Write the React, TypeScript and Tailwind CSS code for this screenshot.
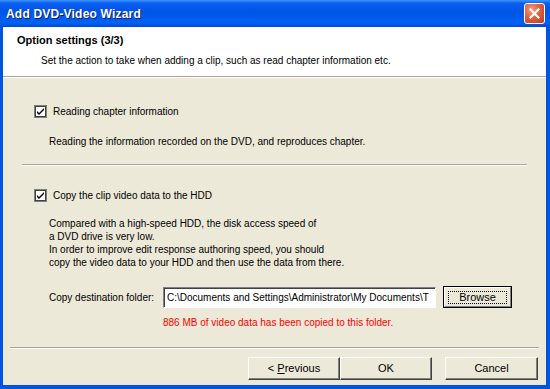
import React from "react";

const font = { fontFamily: '"Liberation Sans", Arial, sans-serif' };

const CheckBox = () => (
  <svg width="13" height="13" viewBox="0 0 13 13" className="shrink-0">
    <rect x="0.5" y="0.5" width="12" height="12" fill="#fff" stroke="#7f7f7f" />
    <rect x="1.5" y="1.5" width="10" height="10" fill="none" stroke="#404040" strokeWidth="1" />
    <path d="M3 6 L5 8 L10 3 L10 5 L5 10 L3 8 Z" fill="#000" />
  </svg>
);

const XpButton = ({ children, width }: { children: React.ReactNode; width: string }) => (
  <div
    className={`${width} h-[23px] flex items-center justify-center bg-[#ece9d8] text-[11px] text-black border border-t-white border-l-white border-r-[#404040] border-b-[#404040] shadow-[inset_-1px_-1px_0_#808080]`}
  >
    {children}
  </div>
);

export default function App() {
  return (
    <div className="w-[550px] h-[389px] flex flex-col bg-[#0054e3] overflow-hidden" style={font}>
      {/* title bar */}
      <div className="h-[27px] flex items-center justify-between pl-[6px] pr-[5px] bg-[linear-gradient(to_bottom,#3d95ff_0%,#0a5ef0_12%,#0055e5_45%,#0062f5_85%,#0049d0_100%)]">
        <span className="text-white font-bold text-[12px] tracking-[0.2px] [text-shadow:1px_1px_0_#0a1e6a]">Add DVD-Video Wizard</span>
        <div className="w-[21px] h-[21px] rounded-[3px] border border-white flex items-center justify-center bg-[radial-gradient(circle_at_35%_30%,#f0a080_0%,#e2603c_45%,#c13a1a_100%)]">
          <svg width="11" height="11" viewBox="0 0 11 11">
            <path d="M1.5 1.5 L9.5 9.5 M9.5 1.5 L1.5 9.5" stroke="#fff" strokeWidth="2.2" strokeLinecap="square" />
          </svg>
        </div>
      </div>

      <div className="flex-1 ml-[3px] mr-[4px] mb-[4px] flex flex-col bg-[#ece9d8]">
        {/* header */}
        <div className="h-[49px] bg-white flex flex-col pl-[14px] pt-[6px]">
          <div className="text-[11px] font-bold text-black leading-[14px]">Option settings (3/3)</div>
          <div className="text-[10px] text-black leading-[13px] pl-[24px] mt-[7px]">
            Set the action to take when adding a clip, such as read chapter information etc.
          </div>
        </div>
        <div className="h-[2px] border-t border-[#aca899] border-b border-b-white" />

        {/* body */}
        <div className="flex-1 flex flex-col text-[10px] text-black leading-[13px]">
          <div className="flex items-center gap-[6px] pl-[31px] mt-[27px]">
            <CheckBox />
            <span>Reading chapter information</span>
          </div>
          <div className="pl-[46px] mt-[17px]">Reading the information recorded on the DVD, and reproduces chapter.</div>

          <div className="mx-[19px] mt-[16px] h-[2px] border-t border-[#aca899] border-b border-b-white" />

          <div className="flex items-center gap-[6px] pl-[31px] mt-[23px]">
            <CheckBox />
            <span>Copy the clip video data to the HDD</span>
          </div>
          <div className="pl-[46px] mt-[15px]">
            <div>Compared with a high-speed HDD, the disk access speed of</div>
            <div>a DVD drive is very low.</div>
            <div>In order to improve edit response authoring speed, you should</div>
            <div>copy the video data to your HDD and then use the data from there.</div>
          </div>

          <div className="flex items-center pl-[46px] mt-[17px]">
            <span className="w-[114px]">Copy destination folder:</span>
            <div className="w-[273px] h-[21px] flex items-center px-[3px] bg-white border border-t-[#808080] border-l-[#808080] border-r-white border-b-white shadow-[inset_1px_1px_0_#404040] overflow-hidden whitespace-nowrap">
              C:\Documents and Settings\Administrator\My Documents\T
            </div>
            <div className="ml-[7px] w-[69px] h-[22px] border border-black flex">
              <div className="flex-1 flex items-center justify-center border border-t-white border-l-white border-r-[#808080] border-b-[#808080]">
                <span className="px-[10px] border border-dotted border-black leading-[11px] text-[11px]">Browse</span>
              </div>
            </div>
          </div>
          <div className="pl-[160px] mt-[8px] text-[#ff0000]">886 MB of video data has been copied to this folder.</div>

          <div className="mx-[7px] mt-[18px] h-[2px] border-t border-[#aca899] border-b border-b-white" />

          <div className="flex justify-end items-center pr-[8px] mt-[8px]">
            <XpButton width="w-[92px]">
              <span>&lt; <span className="underline">P</span>revious</span>
            </XpButton>
            <XpButton width="w-[92px]">OK</XpButton>
            <div className="w-[13px]" />
            <XpButton width="w-[93px]">Cancel</XpButton>
          </div>
        </div>
      </div>
    </div>
  );
}
